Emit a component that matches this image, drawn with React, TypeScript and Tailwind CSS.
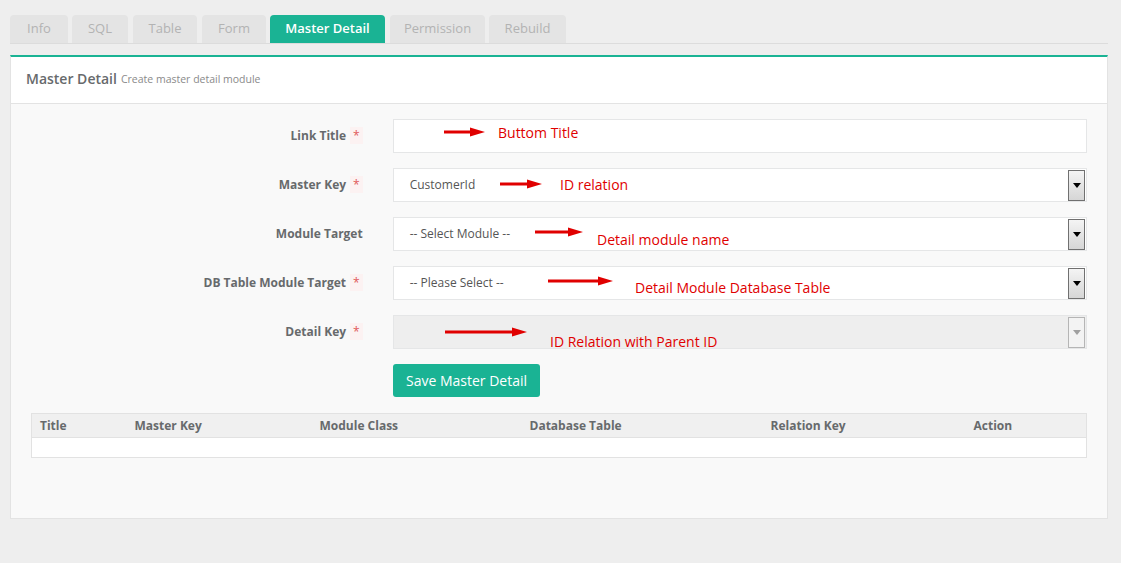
import React from "react";

const tabs: { t: string; cls: string }[] = [
  { t: "Info", cls: "w-[58px]" },
  { t: "SQL", cls: "w-[56px] ml-[4px]" },
  { t: "Table", cls: "w-[64px] ml-[5px]" },
  { t: "Form", cls: "w-[64px] ml-[5px]" },
  { t: "Master Detail", cls: "w-[115px] ml-[4px]" },
  { t: "Permission", cls: "w-[95px] ml-[5px]" },
  { t: "Rebuild", cls: "w-[77px] ml-[4px]" },
];

function Arrow({ x, y, len }: { x: number; y: number; len: number }) {
  return (
    <svg
      className="absolute"
      style={{ left: x, top: y - 5 }}
      width={len}
      height={10}
      viewBox={`0 0 ${len} 10`}
    >
      <line x1={0} y1={5} x2={len - 12} y2={5} stroke="#e00000" strokeWidth={3} />
      <polygon points={`${len - 15},0.5 ${len},5 ${len - 15},9.5`} fill="#e00000" />
    </svg>
  );
}

function Note({ x, y, text }: { x: number; y: number; text: string }) {
  return (
    <div
      className="absolute whitespace-nowrap text-[14px] leading-[18px] text-[#e00000]"
      style={{ left: x, top: y - 9 }}
    >
      {text}
    </div>
  );
}

function DropBtn({ disabled }: { disabled?: boolean }) {
  return (
    <div
      className={
        "absolute right-[1px] top-[1px] flex h-[31px] w-[17px] justify-center border pt-[12px] " +
        (disabled
          ? "border-[#b5b5b5] bg-[#f3f3f3]"
          : "border-[#707070] bg-gradient-to-b from-[#f4f4f4] to-[#d6d6d6]")
      }
    >
      <svg width="8" height="5" viewBox="0 0 8 5">
        <polygon points="0,0 8,0 4,5" fill={disabled ? "#a0a0a0" : "#000"} />
      </svg>
    </div>
  );
}

function Row({
  label,
  req,
  children,
}: {
  label: string;
  req?: boolean;
  children: React.ReactNode;
}) {
  return (
    <div className="flex h-[34px] items-center">
      <div className="w-[334px] pr-[2px] text-right text-[12px] font-bold text-[#676a6c]">
        {label}
        {req && (
          <span className="ml-[4px] bg-[#fcf2f2] px-[3px] font-normal text-[#e05a5a]">*</span>
        )}
      </div>
      <div className="ml-[28px] h-[34px] w-[695px]">{children}</div>
    </div>
  );
}

export default function App() {
  return (
    <div
      className="relative min-h-[563px] w-[1121px] bg-[#eeeeee] px-[10px] pt-[15px] text-[#676a6c]"
      style={{ fontFamily: "'Open Sans', 'Liberation Sans', sans-serif" }}
    >
      {/* Tabs */}
      <div className="flex w-[1098px] border-b border-[#dcdcdc]">
        {tabs.map(({ t, cls }) => {
          const active = t === "Master Detail";
          return (
            <div
              key={t}
              className={
                "flex h-[28px] items-center justify-center rounded-t-[4px] text-[13px] " +
                cls +
                " " +
                (active
                  ? "bg-[#1ab394] font-semibold text-white"
                  : "bg-[#e4e4e4] text-[#b3b3b3]")
              }
            >
              {t}
            </div>
          );
        })}
      </div>

      {/* Panel */}
      <div className="mt-[11px] w-[1098px] border border-t-2 border-[#e3e3e3] border-t-[#1ab394] bg-[#f9f9f9]">
        <div className="flex h-[47px] items-center border-b border-[#e3e3e3] bg-white px-[15px] pb-[3px]">
          <span className="text-[14px] font-semibold text-[#676a6c]">Master Detail</span>
          <span className="ml-[4px] mt-[2px] text-[10.5px] text-[#8a8a8a]">Create master detail module</span>
        </div>

        <div className="px-[20px] pb-[60px] pt-[15px]">
          <div className="flex flex-col gap-[15px]">
            <Row label="Link Title" req>
              <div className="h-full w-full border border-[#e5e6e7] bg-white" />
            </Row>
            <Row label="Master Key" req>
              <div className="relative flex h-full w-full items-center border border-[#e5e6e7] bg-white pl-[16px] text-[12px] text-[#555]">
                CustomerId
                <DropBtn />
              </div>
            </Row>
            <Row label="Module Target">
              <div className="relative flex h-full w-full items-center border border-[#e5e6e7] bg-white pl-[16px] text-[12px] text-[#555]">
                -- Select Module --
                <DropBtn />
              </div>
            </Row>
            <Row label="DB Table Module Target" req>
              <div className="relative flex h-full w-full items-center border border-[#e5e6e7] bg-white pl-[16px] text-[12px] text-[#555]">
                -- Please Select --
                <DropBtn />
              </div>
            </Row>
            <Row label="Detail Key" req>
              <div className="relative h-full w-full border border-[#e5e6e7] bg-[#eeeeee]">
                <DropBtn disabled />
              </div>
            </Row>
          </div>

          <div className="mt-[15px] flex">
            <div className="ml-[362px] flex h-[33px] items-center rounded-[3px] bg-[#1ab394] px-[13px] text-[14px] text-white">
              Save Master Detail
            </div>
          </div>

          <table className="mt-[16px] w-[1056px] table-fixed border-collapse border border-[#e2e2e2] text-left text-[12px] font-bold text-[#676a6c]">
            <colgroup>
              <col style={{ width: 95 }} />
              <col style={{ width: 185 }} />
              <col style={{ width: 210 }} />
              <col style={{ width: 241 }} />
              <col style={{ width: 202 }} />
              <col />
            </colgroup>
            <thead>
              <tr className="h-[24px] border-b border-[#e2e2e2] bg-[#f0f0f0]">
                <th className="pl-[8px]">Title</th>
                <th className="pl-[8px]">Master Key</th>
                <th className="pl-[8px]">Module Class</th>
                <th className="pl-[8px]">Database Table</th>
                <th className="pl-[8px]">Relation Key</th>
                <th className="pl-[9px]">Action</th>
              </tr>
            </thead>
            <tbody>
              <tr className="h-[20px] bg-white">
                <td colSpan={6} />
              </tr>
            </tbody>
          </table>
        </div>
      </div>

      {/* Annotations */}
      <Arrow x={444} y={132} len={41} />
      <Note x={498} y={133} text="Buttom Title" />
      <Arrow x={500} y={184} len={42} />
      <Note x={560} y={185} text="ID relation" />
      <Arrow x={535} y={232} len={48} />
      <Note x={597} y={240} text="Detail module name" />
      <Arrow x={548} y={281} len={65} />
      <Note x={635} y={288} text="Detail Module Database Table" />
      <Arrow x={445} y={332} len={82} />
      <Note x={550} y={342} text="ID Relation with Parent ID" />
    </div>
  );
}
